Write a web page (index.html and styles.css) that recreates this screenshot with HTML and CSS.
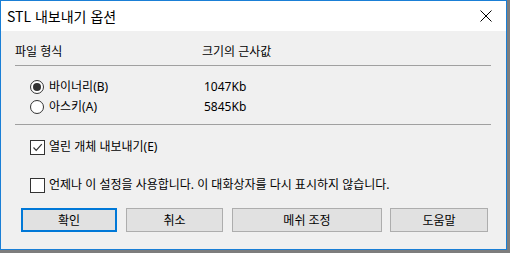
FILE: index.html
```html
<!DOCTYPE html>
<html lang="ko">
<head>
    <meta charset="UTF-8">
    <meta name="viewport" content="width=device-width, initial-scale=1.0">
    <title>STL 내보내기 옵션</title>
    <link rel="stylesheet" href="styles.css">
</head>
<body>
    <div class="window">
        <div class="titlebar">
            <span class="title">STL 내보내기 옵션</span>
            <svg class="close" width="12" height="12" viewBox="0 0 12 12">
                <path d="M0.5 0.5 L11.5 11.5 M11.5 0.5 L0.5 11.5" stroke="#000" stroke-width="1" fill="none"/>
            </svg>
        </div>
        <div class="content">
            <div class="row header">
                <span class="col-a">파일 형식</span>
                <span class="col-b">크기의 근사값</span>
            </div>
            <div class="separator"></div>

            <div class="options">
                <div class="row option">
                    <span class="col-a"><span class="radio checked"></span>바이너리(B)</span>
                    <span class="col-b">1047Kb</span>
                </div>
                <div class="row option">
                    <span class="col-a"><span class="radio"></span>아스키(A)</span>
                    <span class="col-b">5845Kb</span>
                </div>
            </div>
            <div class="separator sep-second"></div>

            <div class="check check-first">
                <span class="box">
                    <svg width="11" height="11" viewBox="0 0 11 11">
                        <path d="M1.5 5.5 L4.2 8.3 L9.8 2.2" stroke="#333" stroke-width="1.2" fill="none"/>
                    </svg>
                </span>
                열린 개체 내보내기(E)
            </div>
            <div class="check check-second">
                <span class="box"></span>
                언제나 이 설정을 사용합니다. 이 대화상자를 다시 표시하지 않습니다.
            </div>

            <div class="buttons">
                <button class="btn btn-default w-ok">확인</button>
                <button class="btn w-cancel">취소</button>
                <button class="btn w-mesh">메쉬 조정</button>
                <button class="btn w-help">도움말</button>
            </div>
        </div>
    </div>
</body>
</html>
```

FILE: styles.css
```css
body {
    margin: 0;
    padding: 0;
    background-color: #7d7d7d;
    font-family: "Noto Sans", "Noto Sans CJK KR", sans-serif;
    color: #000;
}

.window {
    width: 505px;
    height: 248px;
    border: 1px solid #1a7fd6;
    background-color: #f0f0f0;
    display: flex;
    flex-direction: column;
}

.titlebar {
    height: 30px;
    background-color: #fff;
    display: flex;
    align-items: center;
    justify-content: space-between;
    padding: 0 14px 0 6px;
}

.title {
    font-family: "Noto Sans CJK KR", sans-serif;
    font-size: 14px;
    line-height: 16px;
    margin-top: -1px;
}

.close {
    margin-top: -1px;
}

.content {
    padding: 0 15px 0 14px;
    font-size: 12px;
    line-height: 16px;
}

.row {
    display: flex;
    align-items: center;
}

.col-a {
    width: 187px;
    display: flex;
    align-items: center;
}

.header {
    margin-top: 13px;
    height: 16px;
}

.separator {
    margin-top: 5px;
    height: 1px;
    width: 476px;
    background-color: #a0a0a0;
}

.options {
    margin-top: 11px;
}

.option {
    height: 20px;
}

.option .col-b {
    margin-left: 2px;
}

.radio {
    width: 12px;
    height: 12px;
    border: 1px solid #333;
    border-radius: 50%;
    background-color: #fff;
    margin-left: 15px;
    margin-right: 5px;
    display: flex;
    align-items: center;
    justify-content: center;
}

.radio.checked::after {
    content: "";
    width: 8px;
    height: 8px;
    border-radius: 50%;
    background-color: #333;
}

.sep-second {
    margin-top: 7px;
}

.check {
    display: flex;
    align-items: center;
    height: 20px;
}

.check-first {
    margin-top: 12px;
}

.check-second {
    margin-top: 18px;
}

.box {
    width: 13px;
    height: 13px;
    border: 1px solid #333;
    background-color: #fff;
    margin-left: 15px;
    margin-right: 4px;
    display: flex;
    align-items: center;
    justify-content: center;
}

.buttons {
    display: flex;
    margin-top: 13px;
    margin-left: 6px;
    gap: 9px;
}

.btn {
    height: 24px;
    background-color: #e1e1e1;
    border: 1px solid #adadad;
    font-family: "Noto Sans", "Noto Sans CJK KR", sans-serif;
    font-size: 12px;
    color: #000;
    padding: 0;
}

.btn-default {
    border: 2px solid #0078d7;
}

.w-ok { width: 96px; }
.w-cancel { width: 97px; }
.w-mesh { width: 150px; margin-right: -1px; }
.w-help { width: 98px; }
```
